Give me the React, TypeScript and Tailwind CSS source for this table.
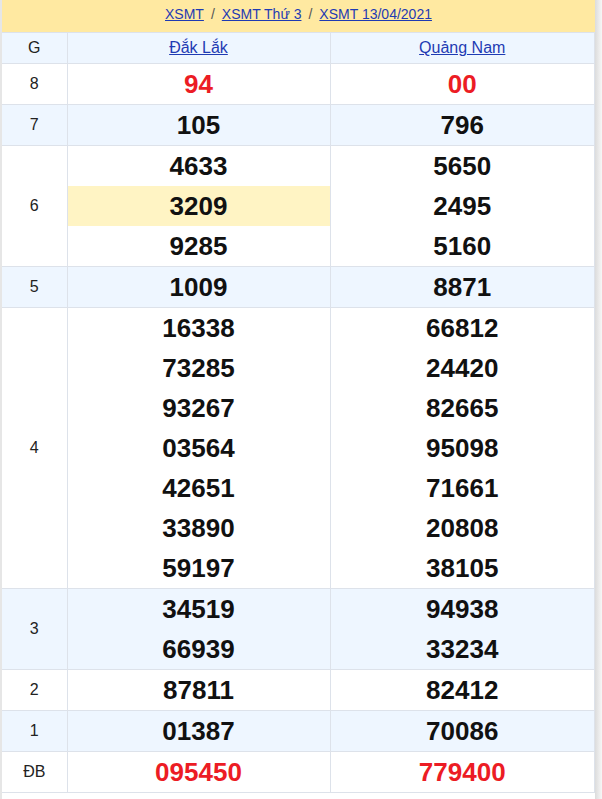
import React from "react";

type Prize = {
  label: string;
  a: string[];
  b: string[];
  shaded?: boolean;
  red?: boolean;
};

const prizes: Prize[] = [
  { label: "8", a: ["94"], b: ["00"], red: true },
  { label: "7", a: ["105"], b: ["796"], shaded: true },
  { label: "6", a: ["4633", "3209", "9285"], b: ["5650", "2495", "5160"] },
  { label: "5", a: ["1009"], b: ["8871"], shaded: true },
  {
    label: "4",
    a: ["16338", "73285", "93267", "03564", "42651", "33890", "59197"],
    b: ["66812", "24420", "82665", "95098", "71661", "20808", "38105"],
  },
  { label: "3", a: ["34519", "66939"], b: ["94938", "33234"], shaded: true },
  { label: "2", a: ["87811"], b: ["82412"] },
  { label: "1", a: ["01387"], b: ["70086"], shaded: true },
  { label: "ĐB", a: ["095450"], b: ["779400"], red: true },
];

const NumberCell: React.FC<{ nums: string[]; red?: boolean; hl?: string }> = ({
  nums,
  red,
  hl,
}) => (
  <td className="border border-[#dde2ea] p-0 align-middle">
    <div className="flex flex-col">
      {nums.map((n, i) => (
        <div
          key={i}
          className={`h-10 flex items-center justify-center text-[26px] font-bold leading-none ${
            red ? "text-[#ec1c24]" : "text-[#111]"
          } ${hl === n ? "bg-[#fff4c4]" : ""}`}
        >
          {n}
        </div>
      ))}
    </div>
  </td>
);

export default function App() {
  return (
    <div
      className="flex min-h-[799px] bg-white"
      style={{ fontFamily: '"Liberation Sans", Arial, sans-serif' }}
    >
      <div className="w-[595px] border-l-2 border-[#e6e6e6]">
        {/* Breadcrumb */}
        <div className="h-8 bg-[#ffe9a1] flex justify-center pt-[4px] text-[14px] text-[#555]">
          <a href="#" className="text-[#1f3bb3] underline">XSMT</a>
          <span className="mx-[7px]">/</span>
          <a href="#" className="text-[#1f3bb3] underline">XSMT Thứ 3</a>
          <span className="mx-[7px]">/</span>
          <a href="#" className="text-[#1f3bb3] underline">XSMT 13/04/2021</a>
        </div>

        <table className="w-full border-collapse table-fixed">
          <colgroup>
            <col className="w-[65px]" />
            <col className="w-[263px]" />
            <col />
          </colgroup>
          <thead>
            <tr className="bg-[#eef6ff] h-[31px]">
              <th className="border border-[#dde2ea] border-l-0 font-normal text-[16px] text-[#222]">G</th>
              <th className="border border-[#dde2ea] font-normal text-[16px]">
                <a href="#" className="text-[#1f3bb3] underline">Đắk Lắk</a>
              </th>
              <th className="border border-[#dde2ea] font-normal text-[16px]">
                <a href="#" className="text-[#1f3bb3] underline">Quảng Nam</a>
              </th>
            </tr>
          </thead>
          <tbody>
            {prizes.map((p) => (
              <tr key={p.label} className={p.shaded ? "bg-[#eef6ff]" : "bg-white"}>
                <td className="border border-[#dde2ea] border-l-0 text-center text-[16px] text-[#222]">
                  {p.label}
                </td>
                <NumberCell nums={p.a} red={p.red} hl={p.label === "6" ? "3209" : undefined} />
                <NumberCell nums={p.b} red={p.red} />
              </tr>
            ))}
          </tbody>
        </table>
        <div className="h-2" />
      </div>
      <div className="flex-1 bg-gradient-to-r from-[#dcdcdc] to-[#f7f7f7]" />
    </div>
  );
}
